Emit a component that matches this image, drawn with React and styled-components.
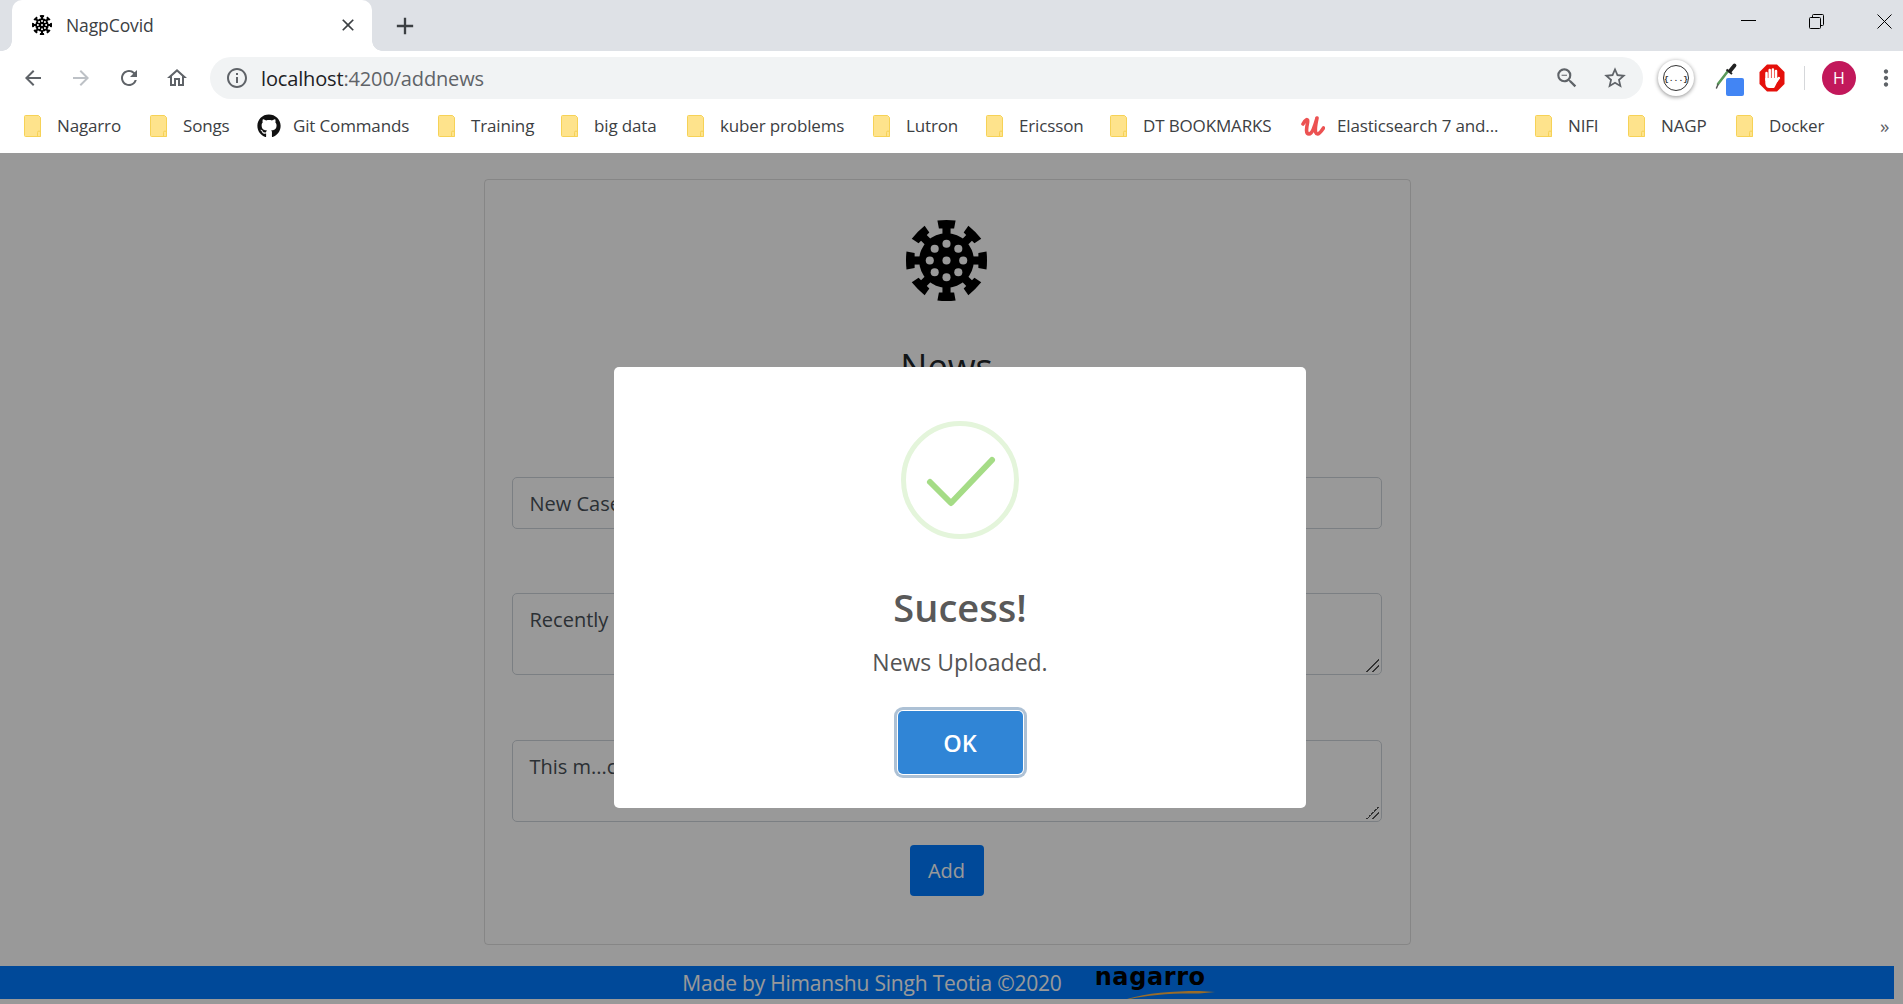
import React from "react";
import styled, { createGlobalStyle } from "styled-components";
import {
  MdArrowBack, MdArrowForward, MdRefresh, MdOutlineHome, MdInfoOutline,
  MdZoomOut, MdStarBorder, MdClose, MdAdd, MdMoreVert,
} from "react-icons/md";
import { FaGithub } from "react-icons/fa";

const UI = `"Open Sans", "Noto Sans", sans-serif`;

const Global = createGlobalStyle`
  html, body { margin: 0; padding: 0; background: #fff; overflow: hidden; }
  * { box-sizing: border-box; }
  body { font-family: ${UI}; width: 1903px; height: 1004px; }
`;

const Browser = styled.div`
  width: 1903px;
  height: 1004px;
  display: flex;
  flex-direction: column;
  position: relative;
  overflow: hidden;
`;

const TabStrip = styled.div`
  height: 51px;
  background: #dee1e6;
  display: flex;
  align-items: stretch;
  padding-left: 12px;
`;

const Tab = styled.div`
  width: 360px;
  background: #fff;
  border-radius: 10px 10px 0 0;
  display: flex;
  align-items: center;
  padding: 0 14px 2px 20px;
  position: relative;
  color: #3c4043;
  font-size: 17.5px;
  letter-spacing: -0.1px;
  &::before, &::after {
    content: "";
    position: absolute;
    bottom: 0;
    width: 10px;
    height: 10px;
  }
  &::before { left: -10px; background: radial-gradient(circle at 0 0, #dee1e6 9.5px, #fff 10px); }
  &::after { right: -10px; background: radial-gradient(circle at 100% 0, #dee1e6 9.5px, #fff 10px); }
`;

const TabTitle = styled.span`
  flex: 1;
  margin-left: 14px;
`;

const NewTab = styled.div`
  margin-left: 19px;
  display: flex;
  align-items: center;
  color: #3c4043;
`;

const WindowControls = styled.div`
  margin-left: auto;
  display: flex;
  align-items: flex-start;
  gap: 53px;
  padding: 14px 11px 0 0;
`;

const Toolbar = styled.div`
  height: 51px;
  display: flex;
  align-items: center;
  padding: 3px 5px 0 21px;
  background: #fff;
`;

const NavIcons = styled.div`
  display: flex;
  gap: 24px;
  align-items: center;
`;

const NavButton = styled.span`
  display: flex;
  width: 24px;
  justify-content: center;
  color: ${(p) => (p.$disabled ? "#bdc1c6" : "#5f6368")};
`;

const Omnibox = styled.div`
  margin-left: 21px;
  flex: none;
  width: 1433px;
  height: 42px;
  border-radius: 21px;
  background: #f1f3f4;
  display: flex;
  align-items: center;
  padding: 0 15px 0 15px;
  color: #5f6368;
`;

const Url = styled.div`
  margin-left: 12px;
  flex: 1;
  font-size: 20px;
  letter-spacing: -0.15px;
  color: #5f6368;
  & b { font-weight: 400; color: #202124; }
`;

const OmniIcons = styled.div`
  display: flex;
  gap: 22px;
  align-items: center;
`;

const Extensions = styled.div`
  display: flex;
  align-items: center;
  margin-left: 15px;
  flex: 1;
`;

const JsonBadge = styled.div`
  width: 36px;
  height: 36px;
  border-radius: 50%;
  background: #fff;
  box-shadow: 0 1px 4px rgba(0,0,0,.45);
  display: flex;
  align-items: center;
  justify-content: center;
`;

const JsonRing = styled.div`
  width: 26px;
  height: 26px;
  border-radius: 50%;
  border: 1.5px solid #333;
  font: 700 8px "Liberation Mono", monospace;
  color: #333;
  display: flex;
  align-items: center;
  justify-content: center;
  white-space: nowrap;
`;

const Picker = styled.div`
  margin-left: 20px;
  width: 30px;
  height: 36px;
  position: relative;
`;

const PickerChip = styled.div`
  position: absolute;
  right: 0;
  bottom: 0;
  width: 18px;
  height: 18px;
  border-radius: 2px;
  background: #4285f4;
`;

const StopBadge = styled.div`
  margin-left: 15px;
  display: flex;
`;

const Divider = styled.div`
  margin-left: 19px;
  width: 1px;
  height: 24px;
  background: #d5d7da;
`;

const Avatar = styled.div`
  margin-left: 17px;
  width: 34px;
  height: 34px;
  border-radius: 50%;
  background: #c2185b;
  color: #fff;
  font-size: 16px;
  display: flex;
  align-items: center;
  justify-content: center;
`;

const MenuButton = styled.div`
  margin-left: 17px;
  display: flex;
  color: #5f6368;
`;

const BookmarkBar = styled.div`
  height: 51px;
  display: flex;
  align-items: center;
  padding: 0 0 4px 24px;
  font-size: 17px;
  letter-spacing: -0.15px;
  color: #3c4043;
  position: relative;
`;

const Bookmark = styled.div`
  display: flex;
  align-items: center;
  gap: ${(p) => p.$gap ?? 15}px;
  width: ${(p) => p.$w}px;
  flex: none;
  white-space: nowrap;
`;

const More = styled.div`
  margin-left: 18px;
  font-size: 19px;
  color: #5f6368;
`;

const Page = styled.main`
  flex: 1;
  width: 1894px;
  display: flex;
  flex-direction: column;
  align-items: center;
`;

const Card = styled.section`
  margin-top: 26px;
  width: 927px;
  height: 766px;
  border: 1px solid rgba(0,0,0,.125);
  border-radius: 4px;
  padding: 40px 28px 0 27px;
  display: flex;
  flex-direction: column;
  align-items: center;
  color: #212529;
`;

const Heading = styled.h2`
  margin: 38px 0 0;
  font-size: 36px;
  line-height: 56px;
  font-weight: 400;
`;

const TextInput = styled.input`
  margin-top: ${(p) => p.$top}px;
  width: 100%;
  height: 52px;
  border: 1px solid #ced4da;
  border-radius: 5px;
  padding: 0 17px;
  font: 400 20px ${UI};
  color: #495057;
  background: #fff;
`;

const TextBox = styled.textarea`
  margin-top: ${(p) => p.$top}px;
  width: 100%;
  height: 82px;
  border: 1px solid #ced4da;
  border-radius: 5px;
  padding: 11px 17px;
  font: 400 20px/30px ${UI};
  color: #495057;
  background: #fff;
  display: block;
  &::-webkit-resizer {
    background: linear-gradient(135deg, transparent 0 50%, #555 50% 55%, transparent 55% 72%, #555 72% 77%, transparent 77%) no-repeat 0 0 / 13px 13px;
  }
`;

const AddButton = styled.button`
  margin-top: 23px;
  width: 74px;
  height: 51px;
  border: 0;
  border-radius: 4px;
  background: #007bff;
  color: #fff;
  font: 400 20px ${UI};
`;

const Footer = styled.footer`
  margin-top: 21px;
  width: 100%;
  height: 33px;
  padding-right: 7px;
  background: #007bff;
  color: #fff;
  font-size: 21px;
  letter-spacing: -0.2px;
  display: flex;
  justify-content: center;
  align-items: center;
  gap: 33px;
`;

const FooterLogo = styled.div`
  position: relative;
  width: 110px;
  height: 33px;
  font: 700 24px/22px "DejaVu Sans", sans-serif;
  color: #000;
  letter-spacing: 0.6px;
`;

const Swoosh = styled.svg`
  position: absolute;
  left: 32px;
  bottom: 0;
`;

const Overlay = styled.div`
  position: absolute;
  top: 153px;
  left: 0;
  right: 0;
  bottom: 0;
  background: rgba(0,0,0,.4);
`;

const Modal = styled.div`
  position: absolute;
  left: 614px;
  top: 214px;
  width: 692px;
  height: 441px;
  background: #fff;
  border-radius: 5px;
  display: flex;
  flex-direction: column;
  align-items: center;
  padding-top: 54px;
`;

const ModalTitle = styled.h2`
  margin: 42px 0 0;
  font-size: 38px;
  line-height: 52px;
  font-weight: 600;
  color: #595959;
`;

const ModalText = styled.div`
  margin-top: 14px;
  font-size: 23px;
  line-height: 30px;
  color: #545454;
`;

const OkButton = styled.button`
  margin-top: 34px;
  width: 125px;
  height: 63px;
  border: 0;
  border-radius: 5px;
  background: #3085d6;
  color: #fff;
  font: 600 23.5px ${UI};
  box-shadow: 0 0 0 1px #fff, 0 0 0 4px rgba(50,100,150,.4);
`;

const Virus = ({ size, color = "#000", hole = "#fff" }) => {
  const spikes = [0, 45, 90, 135, 180, 225, 270, 315];
  const holes = spikes.map((a) => [
    40 + 16.5 * Math.cos((a * Math.PI) / 180),
    40 + 16.5 * Math.sin((a * Math.PI) / 180),
  ]);
  return (
    <svg width={size} height={size} viewBox="0 0 80 80">
      {spikes.map((a) => (
        <g key={a} transform={`rotate(${a} 40 40)`} fill={color}>
          <rect x="36" y="6" width="8" height="12" />
          <path d="M31 0.5 Q40 -0.5 49 0.5 L47.500 8.500 L32.500 8.500 Z" />
        </g>
      ))}
      <circle cx="40" cy="40" r="27" fill={color} />
      <circle cx="40" cy="40" r="4" fill={hole} />
      {holes.map(([x, y], i) => (
        <circle key={i} cx={x} cy={y} r="4" fill={hole} />
      ))}
    </svg>
  );
};

const Folder = () => (
  <svg width="18" height="22" viewBox="0 0 18 22" style={{ flex: "none" }}>
    <path d="M1.5 .5h13l2 2v19h-15a1 1 0 0 1-1-1v-19a1 1 0 0 1 1-1z" fill="#fee38c" stroke="#f6d257" />
    <path d="M13.5 21.5v-4a1.5 1.5 0 0 1 3 0v4" fill="none" stroke="#f6d257" />
  </svg>
);

const Udemy = () => (
  <svg width="24" height="24" viewBox="0 0 24 24" style={{ flex: "none" }}>
    <path d="M2 10C4 6 7.5 3 6.5 9C5.5 14 4.5 20 8 20C11.5 20 14 11 16 4C14.5 11 13 20 16.5 20C18.5 20 20.5 17 22.5 14"
      fill="none" stroke="#ec5252" strokeWidth="3.6" strokeLinecap="round" strokeLinejoin="round" />
  </svg>
);

const Dropper = () => (
  <svg width="30" height="32" viewBox="0 0 30 32">
    <path d="M4 24 L14 11" stroke="#5a9a5a" strokeWidth="2.600" strokeLinecap="round" />
    <path d="M2.500 28 L4 24.500" stroke="#555" strokeWidth="1.500" strokeLinecap="round" />
    <path d="M12.500 9.500 L18 14" stroke="#222" strokeWidth="2" />
    <path d="M16 11 L20.500 5.500" stroke="#222" strokeWidth="3.800" strokeLinecap="round" />
  </svg>
);

const StopSign = () => (
  <svg width="26" height="28" viewBox="0 0 26 28">
    <path d="M8 .5h10l7.5 7.5v12L18 27.500H8L.5 20V8z" fill="#e5100b" />
    <g stroke="#fff" strokeWidth="2.500" strokeLinecap="round" fill="none">
      <path d="M7.500 9v7M10.700 6v9M13.900 5.500v9.500M17 7v8" />
      <path d="M17.500 17l2.300-3" />
    </g>
    <path d="M6.300 14h12l1.500 1-3.800 7.500c-.5 1-1 1.500-2 1.500h-3.500c-2.500 0-4.200-2-4.200-5z" fill="#fff" />
  </svg>
);

const MinIcon = () => (
  <svg width="15" height="14" viewBox="0 0 15 14"><path d="M0 6.500h15" stroke="#000" /></svg>
);
const RestoreIcon = () => (
  <svg width="15" height="15" viewBox="0 0 15 15" fill="none" stroke="#000">
    <rect x=".5" y="3.500" width="11" height="11" rx="1" />
    <path d="M3.500 3.500v-2a1 1 0 0 1 1-1h9a1 1 0 0 1 1 1v9a1 1 0 0 1-1 1h-2" />
  </svg>
);
const CloseIcon = () => (
  <svg width="15" height="15" viewBox="0 0 15 15" stroke="#000"><path d="M.5.500l14 14M14.500.500l-14 14" /></svg>
);

const bookmarks = [
  { label: "Nagarro", w: 126 },
  { label: "Songs", w: 107 },
  { label: "Git Commands", w: 181, icon: <FaGithub size={24} color="#111" />, gap: 12 },
  { label: "Training", w: 123 },
  { label: "big data", w: 126 },
  { label: "kuber problems", w: 186 },
  { label: "Lutron", w: 113 },
  { label: "Ericsson", w: 124 },
  { label: "DT BOOKMARKS", w: 191 },
  { label: "Elasticsearch 7 and...", w: 234, icon: <Udemy />, gap: 12 },
  { label: "NIFI", w: 93 },
  { label: "NAGP", w: 108 },
  { label: "Docker", w: 126 },
];

export default function App() {
  return (
    <Browser>
      <Global />
      <TabStrip>
        <Tab>
          <Virus size={20} />
          <TabTitle>NagpCovid</TabTitle>
          <MdClose size={20} color="#3c4043" />
        </Tab>
        <NewTab><MdAdd size={28} /></NewTab>
        <WindowControls>
          <MinIcon />
          <RestoreIcon />
          <CloseIcon />
        </WindowControls>
      </TabStrip>
      <Toolbar>
        <NavIcons>
          <NavButton><MdArrowBack size={24} /></NavButton>
          <NavButton $disabled><MdArrowForward size={24} /></NavButton>
          <NavButton><MdRefresh size={26} /></NavButton>
          <NavButton><MdOutlineHome size={26} /></NavButton>
        </NavIcons>
        <Omnibox>
          <MdInfoOutline size={24} />
          <Url><b>localhost</b>:4200/addnews</Url>
          <OmniIcons>
            <MdZoomOut size={26} />
            <MdStarBorder size={26} />
          </OmniIcons>
        </Omnibox>
        <Extensions>
          <JsonBadge><JsonRing>{"{...}"}</JsonRing></JsonBadge>
          <Picker><Dropper /><PickerChip /></Picker>
          <StopBadge><StopSign /></StopBadge>
          <Divider />
          <Avatar>H</Avatar>
          <MenuButton><MdMoreVert size={26} /></MenuButton>
        </Extensions>
      </Toolbar>
      <BookmarkBar>
        {bookmarks.map((b) => (
          <Bookmark key={b.label} $w={b.w} $gap={b.gap}>
            {b.icon || <Folder />}
            {b.label}
          </Bookmark>
        ))}
        <More>»</More>
      </BookmarkBar>
      <Page>
        <Card>
          <Virus size={81} hole="#fff" />
          <Heading>News</Heading>
          <TextInput $top={82} defaultValue="New Cases" />
          <TextBox $top={64} defaultValue="Recently" />
          <TextBox $top={65} defaultValue="This m...c" />
          <AddButton>Add</AddButton>
        </Card>
        <Footer>
          <span>Made by Himanshu Singh Teotia ©2020</span>
          <FooterLogo>
            nagarro
            <Swoosh width="88" height="10" viewBox="0 0 88 10">
              <path d="M0 10C20 4 45 2 72 2L88 3L72 4.500C45 4 20 6 3 10z" fill="#ffb545" />
            </Swoosh>
          </FooterLogo>
        </Footer>
      </Page>
      <Overlay>
        <Modal>
          <svg width="118" height="118" viewBox="0 0 118 118">
            <circle cx="59" cy="59" r="56.500" fill="none" stroke="#e4f5db" strokeWidth="5" />
            <path d="M29 61L50 82L91 39" fill="none" stroke="#a5dc86" strokeWidth="6" strokeLinecap="round" strokeLinejoin="round" />
          </svg>
          <ModalTitle>Sucess!</ModalTitle>
          <ModalText>News Uploaded.</ModalText>
          <OkButton>OK</OkButton>
        </Modal>
      </Overlay>
    </Browser>
  );
}
